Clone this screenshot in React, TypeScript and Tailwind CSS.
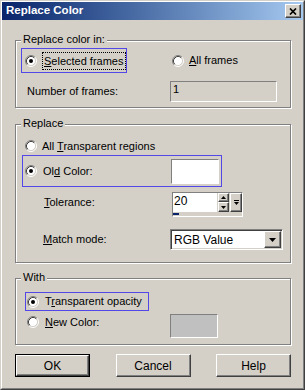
import type { ReactNode } from 'react';

function Radio({ checked = false }: { checked?: boolean }) {
  return (
    <svg width="12" height="12" viewBox="0 0 12 12" className="shrink-0">
      <circle cx="6" cy="6" r="4.5" fill="#fff" />
      <path d="M2.11 9.89 A5.5 5.5 0 0 1 9.89 2.11" stroke="#808080" fill="none" />
      <path d="M9.89 2.11 A5.5 5.5 0 0 1 2.11 9.89" stroke="#fff" fill="none" />
      <path d="M2.82 9.18 A4.5 4.5 0 0 1 9.18 2.82" stroke="#404040" fill="none" />
      <path d="M9.18 2.82 A4.5 4.5 0 0 1 2.82 9.18" stroke="#d4d0c8" fill="none" />
      {checked && <circle cx="6" cy="6" r="2" fill="#000" />}
    </svg>
  );
}

function U({ children }: { children: ReactNode }) {
  return <span className="underline underline-offset-[1px]">{children}</span>;
}

function Group({ title, className, children }: { title: string; className: string; children: ReactNode }) {
  return (
    <div className={`relative w-[276px] border border-[#808080] shadow-[inset_1px_1px_0_#fff,1px_1px_0_#fff] ${className}`}>
      <span className="absolute left-[5px] top-[-8px] bg-[#d4d0c8] px-[2px] leading-[13px]">{title}</span>
      {children}
    </div>
  );
}

const raised =
  'border border-t-white border-l-white border-r-[#404040] border-b-[#404040] shadow-[inset_-1px_-1px_0_#808080] bg-[#d4d0c8]';
const sunken = 'border border-t-[#808080] border-l-[#808080] border-r-white border-b-white';

function DownTri() {
  return (
    <svg width="7" height="4" viewBox="0 0 7 4">
      <path d="M0 0 H7 L3.5 4 Z" fill="#000" />
    </svg>
  );
}

export default function App() {
  return (
    <div className="w-[305px] h-[390px] bg-[#d4d0c8] border border-t-[#d4d0c8] border-l-[#d4d0c8] border-r-[#404040] border-b-[#404040] font-['Liberation_Sans',Arial,sans-serif] text-[11px] text-black">
      <div className="h-full border border-t-white border-l-white border-r-[#808080] border-b-[#808080]">
        {/* Title bar */}
        <div className="h-[18px] flex items-center justify-between pl-[4px] pr-[2px] bg-linear-to-r from-[#0a246a] to-[#a6caf0]">
          <span className="text-white font-bold text-[11.5px] leading-none">Replace Color</span>
          <div className={`w-[16px] h-[14px] flex items-center justify-center ${raised}`}>
            <svg width="8" height="7" viewBox="0 0 8 7">
              <path d="M1 0.5 L7 6.5 M7 0.5 L1 6.5" stroke="#000" strokeWidth="1.7" />
            </svg>
          </div>
        </div>

        <div className="pl-[13px]">
          {/* Replace color in */}
          <Group title="Replace color in:" className="mt-[20px] h-[68px] pt-[7px] pl-[5px]">
            <div className="flex items-center">
              <div className="w-[106px] h-[25px] border border-[#5447e8] flex items-center pl-[3px]">
                <Radio checked />
                <span className="ml-[5px] h-[18px] border border-dotted border-black px-[1px] leading-[16px]">
                  <U>S</U>elected frames
                </span>
              </div>
              <div className="ml-[45px] flex items-center">
                <Radio />
                <span className="ml-[5px]">
                  <U>A</U>ll frames
                </span>
              </div>
            </div>
            <div className="mt-[8px] flex items-center">
              <span className="w-[149px] pl-[6px]">Number of frames:</span>
              <div className={`w-[107px] h-[21px] pl-[2px] leading-[15px] ${sunken}`}>1</div>
            </div>
          </Group>

          {/* Replace */}
          <Group title="Replace" className="mt-[16px] h-[139px] pt-[13px] pl-[6px]">
            <div className="h-[16px] flex items-center pl-[3px]">
              <Radio />
              <span className="ml-[5px]">
                All <U>T</U>ransparent regions
              </span>
            </div>
            <div className="mt-[1px] w-[200px] h-[32px] border border-[#5447e8] flex items-center pl-[2px]">
              <Radio checked />
              <span className="ml-[6px] flex-1">
                Ol<U>d</U> Color:
              </span>
              <div className={`w-[48px] h-[25px] mr-[2px] bg-white ${sunken}`} />
            </div>
            <div className="mt-[5px] flex items-start">
              <span className="w-[150px] h-[20px] pl-[22px] flex items-center">
                <span>
                  <U>T</U>olerance:
                </span>
              </span>
              <div className={`w-[71px] h-[25px] flex flex-col ${sunken}`}>
                <div className="flex h-[19px]">
                  <div className="w-[45px] h-[19px] bg-white pl-[1px] leading-[17px] text-[12px]">20</div>
                  <div className="ml-[1px] w-[11px] flex flex-col">
                    <div className={`h-[9px] flex items-center justify-center ${raised}`}>
                      <svg width="5" height="3" viewBox="0 0 5 3">
                        <path d="M0 3 H5 L2.5 0 Z" fill="#000" />
                      </svg>
                    </div>
                    <div className={`h-[10px] flex items-center justify-center ${raised}`}>
                      <svg width="5" height="3" viewBox="0 0 5 3">
                        <path d="M0 0 H5 L2.5 3 Z" fill="#000" />
                      </svg>
                    </div>
                  </div>
                  <div className={`ml-[1px] w-[12px] h-[19px] flex flex-col items-center justify-center gap-[1px] ${raised}`}>
                    <div className="w-[5px] h-[1px] bg-black" />
                    <svg width="5" height="3" viewBox="0 0 5 3">
                      <path d="M0 0 H5 L2.5 3 Z" fill="#000" />
                    </svg>
                  </div>
                </div>
                <div className="mt-[1px] w-[6px] h-[2px] bg-[#0a246a]" />
              </div>
            </div>
            <div className="mt-[12px] flex items-center">
              <span className="w-[148px] pl-[21px]">
                <U>M</U>atch mode:
              </span>
              <div className="w-[113px] h-[21px] flex items-center bg-white border border-t-[#808080] border-l-[#808080] border-r-white border-b-white shadow-[inset_1px_1px_0_#404040,inset_-1px_-1px_0_#d4d0c8]">
                <span className="flex-1 pl-[3px] text-[12px]">RGB Value</span>
                <div className={`w-[17px] h-[17px] mr-[1px] flex items-center justify-center ${raised}`}>
                  <DownTri />
                </div>
              </div>
            </div>
          </Group>

          {/* With */}
          <Group title="With" className="mt-[15px] h-[67px] pt-[13px] pl-[9px]">
            <div className="w-[124px] h-[19px] border border-[#5447e8] flex items-center pl-[1px]">
              <Radio checked />
              <span className="ml-[6px]">
                T<U>r</U>ansparent opacity
              </span>
            </div>
            <div className="mt-[3px] flex items-start">
              <div className="w-[145px] h-[16px] flex items-center pl-[2px]">
                <Radio />
                <span className="ml-[6px]">
                  <U>N</U>ew Color:
                </span>
              </div>
              <div className={`w-[48px] h-[24px] bg-[#c0c0c0] ${sunken}`} />
            </div>
          </Group>

          {/* Buttons */}
          <div className="mt-[9px] w-[276px] flex justify-between">
            <div className="w-[75px] h-[23px] border border-black">
              <div className={`h-full flex items-center justify-center text-[12px] ${raised}`}>OK</div>
            </div>
            <div className={`w-[75px] h-[23px] flex items-center justify-center text-[12px] ${raised}`}>Cancel</div>
            <div className={`w-[75px] h-[23px] flex items-center justify-center text-[12px] ${raised}`}>Help</div>
          </div>
        </div>
      </div>
    </div>
  );
}
